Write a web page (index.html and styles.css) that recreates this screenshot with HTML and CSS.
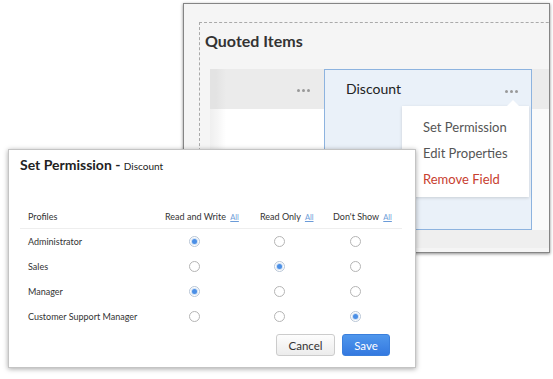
FILE: index.html
```html
<!DOCTYPE html>
<html lang="en">
<head>
    <meta charset="UTF-8">
    <meta name="viewport" content="width=device-width, initial-scale=1.0">
    <title>Set Permission - Discount</title>
    <link rel="stylesheet" href="styles.css">
</head>
<body>
    <div class="desk">
        <section class="editor">
            <div class="layout">
                <h2 class="section-title">Quoted Items</h2>
                <div class="items">
                    <div class="col col-first">
                        <div class="col-head"><span class="dots"><i></i><i></i><i></i></span></div>
                        <div class="col-body"></div>
                    </div>
                    <div class="col col-active">
                        <div class="col-head">
                            <span class="col-name">Discount</span>
                            <span class="dots"><i></i><i></i><i></i></span>
                        </div>
                        <div class="col-body"></div>
                        <ul class="field-menu">
                            <li>Set Permission</li>
                            <li>Edit Properties</li>
                            <li class="danger">Remove Field</li>
                        </ul>
                    </div>
                    <div class="col col-next">
                        <div class="col-head"></div>
                        <div class="col-body"></div>
                    </div>
                </div>
                <div class="items-foot"></div>
            </div>
        </section>

        <section class="dialog">
            <h3 class="dialog-title">Set Permission - <small>Discount</small></h3>
            <div class="perm-table">
                <div class="th">Profiles</div>
                <div class="th">Read and Write <a href="#">All</a></div>
                <div class="th">Read Only <a href="#">All</a></div>
                <div class="th">Don't Show <a href="#">All</a></div>

                <div class="td name">Administrator</div>
                <div class="td rw"><input type="radio" name="p1" checked></div>
                <div class="td ro"><input type="radio" name="p1"></div>
                <div class="td ds"><input type="radio" name="p1"></div>

                <div class="td name">Sales</div>
                <div class="td rw"><input type="radio" name="p2"></div>
                <div class="td ro"><input type="radio" name="p2" checked></div>
                <div class="td ds"><input type="radio" name="p2"></div>

                <div class="td name">Manager</div>
                <div class="td rw"><input type="radio" name="p3" checked></div>
                <div class="td ro"><input type="radio" name="p3"></div>
                <div class="td ds"><input type="radio" name="p3"></div>

                <div class="td name">Customer Support Manager</div>
                <div class="td rw"><input type="radio" name="p4"></div>
                <div class="td ro"><input type="radio" name="p4"></div>
                <div class="td ds"><input type="radio" name="p4" checked></div>
            </div>
            <div class="dialog-actions">
                <button class="btn">Cancel</button>
                <button class="btn btn-primary">Save</button>
            </div>
        </section>
    </div>
</body>
</html>
```

FILE: styles.css
```css
* {
    box-sizing: border-box;
}
body {
    margin: 0;
    font-family: Lato, "Open Sans", sans-serif;
    color: #222;
    background: #fff;
}
.desk {
    position: relative;
    width: 553px;
    height: 379px;
    overflow: hidden;
}

/* background window: the layout editor */
.editor {
    position: absolute;
    left: 183px;
    top: 3px;
    width: 367px;
    height: 250px;
    border: 1px solid #858585;
    background: #f5f5f5;
    box-shadow: 0 1px 3px rgba(0, 0, 0, 0.45);
    overflow: hidden;
    padding: 18px 0 0 15px;
}
.layout {
    height: 100%;
    width: 400px;
    border-top: 1px dashed #aaa;
    border-left: 1px dashed #aaa;
}
.section-title {
    margin: 0;
    padding: 8px 0 0 5px;
    font-size: 16px;
    line-height: 20px;
    font-weight: bold;
    color: #333;
}
.items {
    display: flex;
    height: 161px;
    margin: 18px 0 0 10px;
}
.col {
    display: flex;
    flex-direction: column;
}
.col-head {
    height: 40px;
    display: flex;
    align-items: center;
    justify-content: flex-end;
    padding-right: 14px;
    background: #ebebeb;
}
.col-body {
    flex: 1;
    background: #fff;
}
.col-first {
    width: 114px;
}
.col-first .col-head {
    background: linear-gradient(to right, #e3e3e3 0, #e3e3e3 6px, #ebebeb 16px);
}
.col-first .col-body {
    background: linear-gradient(to right, #efefef 0, #f6f6f6 8px, #fff 16px);
}
.col-active {
    position: relative;
    width: 208px;
    border: 1px solid #8db3df;
    background: #eaf1f9;
}
.col-active .col-head {
    height: 39px;
    justify-content: space-between;
    padding: 0 13px 0 21px;
    background: none;
}
.col-active .col-body {
    background: none;
}
.col-name {
    font-size: 14px;
    color: #222;
    margin-bottom: 3px;
}
.col-next {
    width: 60px;
}
.col-next .col-body {
    background: #fafafa;
}
.dots {
    display: flex;
    gap: 2px;
    margin-top: 3px;
}
.dots i {
    width: 3px;
    height: 3px;
    border-radius: 50%;
    background: #999;
}
.items-foot {
    height: 18px;
    margin-left: 10px;
    background: #efefef;
}

.field-menu {
    position: absolute;
    left: 77px;
    top: 36px;
    width: 127px;
    margin: 0;
    padding: 8px 0 5px;
    list-style: none;
    background: #fff;
    box-shadow: 0 1px 3px rgba(0, 0, 0, 0.15);
}
.field-menu::before {
    content: "";
    position: absolute;
    top: -6px;
    right: 10px;
    border-left: 6px solid transparent;
    border-right: 6px solid transparent;
    border-bottom: 6px solid #fff;
}
.field-menu li {
    padding-left: 21px;
    font-size: 13px;
    line-height: 26px;
    color: #555;
}
.field-menu .danger {
    color: #c8402f;
}

/* foreground window: permission dialog */
.dialog {
    position: absolute;
    left: 8px;
    top: 149px;
    width: 408px;
    height: 219px;
    padding: 5px 13px 0 11px;
    background: #fff;
    border: 1px solid #c4c4c4;
    box-shadow: 0 1px 5px rgba(0, 0, 0, 0.35);
}
.dialog-title {
    margin: 0;
    font-size: 14px;
    line-height: 19px;
    font-weight: bold;
    color: #222;
}
.dialog-title small {
    font-size: 10px;
    font-weight: normal;
}
.perm-table {
    display: grid;
    grid-template-columns: 145px 95px 73px 1fr;
    margin-top: 29px;
    font-size: 9px;
    color: #333;
}
.th {
    height: 24px;
    line-height: 23px;
    border-bottom: 1px solid #eee;
}
.th a {
    font-size: 7.5px;
    color: #6b9bd8;
    margin-left: 2px;
}
.td {
    height: 25px;
    display: flex;
    align-items: center;
    padding-bottom: 1px;
}
.name,
.th:first-child {
    padding-left: 8px;
}
.rw { padding-left: 24px; }
.ro { padding-left: 14px; }
.ds { padding-left: 17px; }
input[type="radio"] {
    appearance: none;
    margin: 0;
    width: 11px;
    height: 11px;
    border: 1px solid #b5b5b5;
    border-radius: 50%;
    background: #fff;
    display: grid;
    place-items: center;
}
input[type="radio"]:checked {
    border-color: #b9c6d6;
}
input[type="radio"]:checked::after {
    content: "";
    width: 5px;
    height: 5px;
    border-radius: 50%;
    background: #4b8fe6;
    box-shadow: 0 0 0 1px #cfe0f5;
}
.dialog-actions {
    display: flex;
    justify-content: flex-end;
    gap: 7px;
    margin-top: 5px;
    padding-right: 12px;
}
.btn {
    height: 22px;
    width: 59px;
    padding: 0;
    font-family: inherit;
    font-size: 11.5px;
    color: #333;
    border: 1px solid #ccc;
    border-radius: 3px;
    background: linear-gradient(#fdfdfd, #ececec);
    cursor: pointer;
}
.btn-primary {
    width: 48px;
    color: #fff;
    border-color: #3a7fdc;
    background: linear-gradient(#4f97ec, #3479e0);
}
```
